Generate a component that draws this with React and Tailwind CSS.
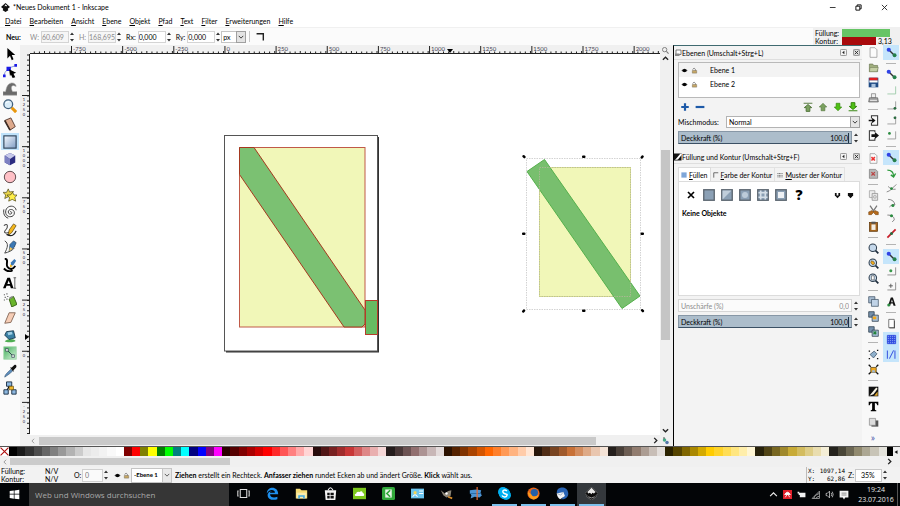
import React from "react";

const PALETTE = (
  "000000 1a1a1a 333333 4d4d4d 666666 808080 999999 b3b3b3 cccccc e6e6e6 ececec f2f2f2 f9f9f9 ffffff " +
  "800000 ff0000 808000 ffff00 008000 00ff00 008080 00ffff 000080 0000ff 800080 ff00ff " +
  "2b0000 550000 800000 aa0000 d40000 ff0000 ff2a2a ff5555 ff8080 ffaaaa ffd5d5 " +
  "280b0b 501616 782121 a02c2c c83737 d35f5f de8787 e9afaf f4d7d7 " +
  "241c1c 483737 6c5353 916f6f ac9393 c8b7b7 e3dbdb " +
  "2b1100 552200 803300 aa4400 d45500 ff6600 ff7f2a ff9955 ffb380 ffccaa ffe6d5 " +
  "28170b 502d16 784421 a05a2c c87137 d38d5f deaa87 e9c6af f4e3d7 " +
  "241f1c 483e37 6c5d53 917c6f ac9d93 c8beb7 e3dedb " +
  "2b2200 554400 806600 aa8800 d4aa00 ffcc00 ffd42a ffdd55 ffe680 ffeeaa fff6d5 " +
  "28220b 504416 786721 a0892c c8ab37 d3bc5f decd87 e9ddaf f4eed7 " +
  "24221c 484537 6c6753 918a6f aca793 c8c4b7 e3e2db"
).split(" ");

function Ic({ children, className = "size-[14px]" }) {
  return (
    <svg viewBox="0 0 16 16" className={className} fill="none" stroke="none" aria-hidden="true">
      {children}
    </svg>
  );
}

/* ---------- tool box ---------- */
const TOOLS = [
  ["Auswählen", <path d="M5 1v12l3-3 2 5 2-1-2-5h4z" fill="#000" />],
  ["Knoten", <><path d="M1 14Q2 5 14 2" stroke="#7c8cd0" /><path d="M0 12h3v3H0zM4 3h5v5H4zM13 0h3v3h-3z" fill="#1a1ae6" /><path d="M7 6l8 4-3 1 2 4-3 1-2-4-1 2z" fill="#000" /></>],
  ["Verbessern", <path d="M0 15v-4h3C4 6 5 2 10 1c3 0 5 2 5 4l-3-1c-3 0-3 4-1 7h5v4z" fill="#6a6a6a" stroke="#999" strokeWidth=".6" />],
  ["Zoom", <><circle cx="6" cy="6" r="5" fill="#d9ecf8" stroke="#3f5f7c" strokeWidth="1.5" /><path d="M10 10l5 5" stroke="#e8970c" strokeWidth="3.5" /><path d="M3 5q1-2 4-2" stroke="#fff" /></>],
  ["Messen", <><path d="M2 4l7-3 5 10-6 4z" fill="#dda98c" stroke="#50352b" /><path d="M2 4l6 11" stroke="#3c2a22" strokeWidth="1.8" /></>],
  ["Rechteck", <><defs><linearGradient id="rg" x1="0" y1="0" x2="1" y2="1"><stop stopColor="#f6faff" /><stop offset="1" stopColor="#7e9cc4" /></linearGradient></defs><rect x="1" y="1" width="14" height="14" fill="url(#rg)" stroke="#2f4258" strokeWidth="1.3" /></>],
  ["Quader", <><path d="M8 1l6 3v8l-6 3-6-3V4z" fill="#2c2c80" /><path d="M8 1l6 3-6 4-6-4z" fill="#c6c8ea" /><path d="M2 4l6 4v7l-6-3z" fill="#7d80c2" /></>],
  ["Ellipse", <circle cx="8" cy="8" r="6.5" fill="#ffc0c6" stroke="#4c3a3d" />],
  ["Stern", <><path d="M6 1l1.500 3.500L12 4 9 8l2 4-5-2-4 2 1-4-3-3 4 0z" fill="#e9d44a" stroke="#4d4718" strokeWidth=".8" /><path d="M11 5l1.500 3 3.500 0-2.500 3 1 4-4-2-4 2 1-4-3-3 4 0z" fill="#fff04a" stroke="#4d4718" strokeWidth=".8" /></>],
  ["Spirale", <path d="M8 8c1-1 2 0 2 1 0 2-4 2-4-1 0-4 7-4 7 1 0 6-10 6-10-1 0-8 11-9 12-2M1 5c-1 5 1 9 5 10" stroke="#3b3b3b" strokeWidth="1.1" />],
  ["Freihand", <><path d="M1 3c5-4 5 2 2 5s0 5 5 2" stroke="#444" strokeWidth="1.2" /><path d="M7 8l5-7 3 2-5 8-4 3z" fill="#f5b81e" stroke="#443308" strokeWidth=".7" /><path d="M4 13c6 3 9 1 11-4" stroke="#222" strokeWidth="1.5" /></>],
  ["Bezier", <><path d="M2 1c5 3 3 8 0 14 4-1 9-3 11-6" stroke="#444" strokeWidth="1.1" /><path d="M8 5l4-4 3 2-2 5-6 5z" fill="#3c78b4" stroke="#173452" strokeWidth=".7" /><path d="M8 8l3 2-4 3z" fill="#f5c65a" /></>],
  ["Kalligrafie", <><path d="M2 1c5 0 1 6 3 9s6 4 9-1M1 12c4 4 7 4 10 2" stroke="#000" strokeWidth="2.200" /><path d="M9 5l4-4 2 2-3 5-3 1z" fill="#3c78b4" /><path d="M8 7l3 2-3 2z" fill="#f5b81e" /></>],
  ["Text", <><path d="M0 14L5 2h3l4 12H9L8 11H4l-1 3zM5 9h3L6.500 5z" fill="#000" fillRule="evenodd" /><path d="M12 2h3M13.500 2v12M12 14h3" stroke="#555" /></>],
  ["Spray", <><path d="M7 7l5-3 4 9-6 3z" fill="#6ab52c" stroke="#355b15" /><path d="M7 5l4-2v2L8 7z" fill="#8a8a8a" /><path d="M1 2h1M4 1h1M2 5h1M5 4h1M4 7h1M1 8h1" stroke="#333" strokeWidth="1.400" /></>],
  ["Radierer", <path d="M7 2h7L9 13l-7 1z" fill="#f6cdb6" stroke="#7f6252" />],
  ["Füllen", <><path d="M2 14c2-3 10-3 12-1s-10 3-12 1z" fill="#4fae52" /><path d="M4 3l8-1 2 8-7 2-5-5z" fill="#3a7fa3" stroke="#16364a" /><path d="M5 4l5-1 1 3-5 1z" fill="#9fd0e6" /></>],
  ["Verlauf", <><defs><linearGradient id="gg" x1="0" y1="0" x2="1" y2="1"><stop stopColor="#3fae58" /><stop offset="1" stopColor="#d9f3dd" /></linearGradient></defs><rect x="1" y="1" width="14" height="14" fill="url(#gg)" stroke="#8fcf9b" /><path d="M5 5l6 6" stroke="#234" /><path d="M3 3h3v3H3zM10 10h3v3h-3z" fill="#eef8ef" stroke="#345" strokeWidth=".8" /></>],
  ["Pipette", <><path d="M2 15c0-3 4-6 7-9l2 2c-3 3-6 5-9 7z" fill="#5e8dbb" stroke="#284a6c" strokeWidth=".6" /><path d="M8 4l2 0 3-3c2-1 3 1 2 3l-3 3v2z" fill="#111" /></>],
  ["Verbinder", <><path d="M7 6L4 12M9 6l3 6" stroke="#000" strokeWidth="1.300" /><path d="M4 1h6v5H4zM1 10h5v5H1zM10 10h5v5h-5z" fill="#8db8e0" stroke="#16283c" /><path d="M7 6h5v4H7z" fill="#f1b92d" stroke="#5c4306" strokeWidth=".7" /></>],
];

/* ---------- command bar ---------- */
const page = <path d="M3 1h7l3 3v11H3z" fill="#fbfbfb" stroke="#8c8c8c" />;
const mag = <><path d="M10 10l5 5" stroke="#1f2d3d" strokeWidth="2.500" /><circle cx="7" cy="7" r="5.500" fill="#c4d7ea" stroke="#2d3d4d" strokeWidth="1.500" /></>;
const COMMANDS = [
  ["Neu", page],
  ["Öffnen", <><path d="M2 3h5l1 2h6v9H2z" fill="#9fae7d" stroke="#6c7753" /><path d="M3 8h12l-2 6H2z" fill="#c4cfa5" stroke="#6c7753" strokeWidth=".7" /></>],
  ["Speichern", <><rect x="1" y="1" width="14" height="14" fill="#1f4b85" /><rect x="2" y="1" width="12" height="4" fill="#e22020" /><path d="M2 5h12v3H2z" fill="#fff" /><path d="M5 10h6v5H5z" fill="#aac3de" /></>],
  ["Drucken", <><path d="M5 1h6v6H5z" fill="#eee" stroke="#777" /><path d="M2 7h12l1 6H1z" fill="#a9a9a9" stroke="#555" /><path d="M3 11h10" stroke="#fff" /></>],
  null,
  ["Importieren", <><path d="M5 5V1h9v14H5v-4" stroke="#333" strokeWidth="1.500" /><path d="M1 7h5V4l5 4-5 4V9H1z" fill="#111" /></>],
  ["Exportieren", <><path d="M10 3V1H2v14h8v-3" stroke="#333" strokeWidth="1.500" /><path d="M5 6h5V3l6 5-6 5v-3H5z" fill="#111" /></>],
  null,
  ["Rückgängig", <>{page}<path d="M5 6l5 5M10 6l-5 5" stroke="#e33" strokeWidth="2.200" /></>],
  ["Wiederholen", <><path d="M2 2h9l3 3v10H2z" fill="#b6b6b6" stroke="#777" /><path d="M5 6l5 5M10 6l-5 5" stroke="#b44" strokeWidth="1.800" /></>],
  null,
  ["Kopieren", <><path d="M2 1h8v10H2z" fill="#eee" stroke="#999" /><path d="M6 5h8v10H6z" fill="#e6e6e6" stroke="#888" /><circle cx="10" cy="10" r="2" stroke="#999" /></>],
  ["Ausschneiden", <><path d="M3 1l6 9M13 1L7 10" stroke="#777" strokeWidth="1.800" /><path d="M1 10l5-2 2 2 2-2 5 2v4h-4l-3-3-3 3H1z" fill="#b56a1b" stroke="#6b3a08" strokeWidth=".7" /></>],
  ["Einfügen", <><rect x="2" y="2" width="12" height="13" fill="#a5641c" stroke="#5c3508" /><path d="M5 5h6v8H5z" fill="#f3eee5" /><path d="M5 1h6v3H5z" fill="#555" /></>],
  null,
  ["Zoom Auswahl", mag],
  ["Zoom Zeichnung", <>{mag}<path d="M5 4l3 1 2 3-3 2-3-3z" fill="#f0a91e" stroke="#4b3a10" strokeWidth=".7" /></>],
  ["Zoom Seite", <>{mag}<path d="M5 4h4v6H5z" fill="#fff" stroke="#333" strokeWidth=".8" /></>],
  null,
  ["Duplizieren", <><path d="M1 1h9v9H1z" fill="#a8bdd2" stroke="#34485c" /><path d="M5 5h10v10H5z" fill="#bfd2e6" stroke="#34485c" /></>],
  ["Klonen", <><path d="M1 1h8v8H1z" fill="#7590ab" stroke="#1f3040" /><path d="M6 6h9v9H6z" fill="#a9c0d8" stroke="#1f3040" /><path d="M7 8h5v4H7z" fill="#f1a81e" /></>],
  ["Klon trennen", <><path d="M1 1h8v8H1z" fill="#7590ab" stroke="#1f3040" /><path d="M6 6h9v9H6z" fill="#a9c0d8" stroke="#1f3040" /><path d="M8 8l4 4M12 8l-4 4" stroke="#22823a" strokeWidth="2" /></>],
  null,
  ["Gruppieren", <><path d="M3 8l6-5 4 4-5 6z" fill="#8fb0cc" stroke="#34485c" /><path d="M1 2h2v2H1zM13 1h2v2h-2zM1 13h2v2H1zM13 13h2v2h-2z" fill="#111" /></>],
  ["Gruppierung aufheben", <><path d="M4 5h8v7H4z" fill="#f1a81e" stroke="#4b3a10" /><path d="M6 9h4v3H6z" fill="#9bb8d4" /><path d="M1 1l3 3M15 1l-3 3M1 15l3-3M15 15l-3-3" stroke="#111" strokeWidth="1.800" /></>],
  null,
  ["Füllung und Kontur", <><rect x="1" y="1" width="14" height="14" fill="#111" /><path d="M2 14L12 2l2 2L8 12z" fill="#f7f3e4" /><path d="M9 14l5-6v6z" fill="#e0a62c" /></>],
  ["Text und Schrift", <path d="M1 1h14v5h-1.500q-.5-3-3.500-3v9q0 1.500 2 1.500V15H4v-1.500q2 0 2-1.500V3Q3 3 2.500 6H1z" fill="#000" />],
  ["Ebenen", <><path d="M5 5h10v9H5z" fill="#555" /><path d="M2 2h9v10H2z" fill="#dcdcdc" stroke="#888" /></>],
];

/* ---------- snap bar ---------- */
const link = <><path d="M4 4l8 8" stroke="#333" strokeWidth="2" /><circle cx="4" cy="4" r="3" fill="#3043e6" /><circle cx="12.500" cy="12" r="2.800" fill="#25804a" /></>;
const corner = (c) => <path d="M14 2v11H2" stroke={c} strokeWidth="1.300" />;
const SNAPS = [
  ["Einrasten", link, true],
  null,
  ["Umrandung", link],
  ["Kanten", corner("#9ccaa8")],
  ["Ecken", <>{corner("#9a9a9a")}<circle cx="13" cy="12" r="2" fill="#2b6b40" /></>],
  ["Kantenmitten", <>{corner("#9a9a9a")}<circle cx="13" cy="4" r="2" fill="#2b6b40" /></>],
  ["Zentren", <>{corner("#9a9a9a")}<circle cx="5" cy="5" r="2" fill="#2b8b40" /></>],
  null,
  ["Knoten einrasten", link, true],
  ["Pfade", <path d="M2 3c6 0 9 3 9 9M7 10l4 3 3-5" stroke="#2d9a3c" strokeWidth="2" />],
  ["Pfadüberschneidungen", <><path d="M1 13C6 12 10 7 15 2M3 5c3 3 7 5 11 4" stroke="#777" strokeWidth="1.200" /><circle cx="8" cy="8" r="2" fill="#2b8b40" /></>],
  ["Spitze Knoten", <><path d="M3 2c6 0 9 3 10 8-3-1-5 0-8 3" stroke="#777" strokeWidth="1.300" /><circle cx="10" cy="11" r="2.200" fill="#2b8b40" /></>],
  ["Glatte Knoten", <><path d="M2 3c6 0 10 2 10 7l-3 3" stroke="#777" strokeWidth="1.300" /><circle cx="8" cy="4" r="2.200" fill="#2b8b40" /></>],
  ["Linienmitten", <><path d="M2 14L14 2" stroke="#c8202a" strokeWidth="2.500" /><circle cx="8" cy="8" r="2.200" fill="#2b6b40" /></>],
  null,
  ["Andere Punkte", link, true],
  ["Objektmitten", <>{corner("#888")}<circle cx="7" cy="7" r="2.200" fill="#3a9a4c" /></>],
  ["Rotationszentren", <>{corner("#888")}<path d="M7 4v6M4 7h6" stroke="#555" strokeWidth="1.300" /></>],
  ["Text-Grundlinien", <><path d="M3 14L7 2h3l4 12h-3l-1-3H7l-1 3zM7.500 9h2.500L8.500 5z" fill="#111" fillRule="evenodd" /><circle cx="4" cy="13" r="2.200" fill="#2b8b40" /></>],
  null,
  ["Seitenrand", <><path d="M5 4h8v11H5z" fill="#333" /><path d="M4 2h8v12H4z" fill="#fff" stroke="#444" /></>],
  ["Gitter", <><rect x="2" y="2" width="12" height="12" fill="#7d97f0" /><path d="M2 2h12v12H2zM5 2v12M8 2v12M11 2v12M2 5h12M2 8h12M2 11h12" stroke="#2d48e0" strokeWidth="1.300" /></>, true],
  ["Führungslinien", <path d="M2 2v12M5 14L11 2M13 2v12" stroke="#3a55e0" strokeWidth="1.500" />, true],
];

function IconColumn({ items, label, className }) {
  return (
    <nav aria-label={label} className={"flex w-[18px] shrink-0 flex-col items-center justify-between " + className}>
      {items.map((it, i) =>
        it ? (
          <button
            key={i}
            title={it[0]}
            className={"flex h-[15px] w-4 items-center justify-center " + (it[2] ? "bg-[#c5e5fb]" : "")}
          >
            <Ic className="size-[11px]">{it[1]}</Ic>
          </button>
        ) : (
          <span key={i} className="flex h-[7px] w-[10px] items-center">
            <span className="h-px w-full bg-[#b4b4b4]" />
          </span>
        )
      )}
    </nav>
  );
}

/* ---------- small controls ---------- */
function Spin() {
  return (
    <svg viewBox="0 0 6 12" className="h-[12px] w-[6px] shrink-0" aria-hidden="true">
      <path d="M1 4l2-2.500L5 4zM1 8l2 2.500L5 8z" fill="#333" />
    </svg>
  );
}

function NumField({ id, label, value, disabled }) {
  return (
    <div className="flex items-center">
      <label htmlFor={id} className={"mr-[2px] " + (disabled ? "text-[#8c8c8c]" : "text-black")}>{label}</label>
      <input
        id={id}
        defaultValue={value}
        disabled={disabled}
        className={"h-[12px] w-[28px] border border-[#d4d4d4] " + (disabled ? "bg-[#f6f6f6] text-[#8c8c8c]" : "bg-white text-black")}
      />
      <Spin />
    </div>
  );
}

function BarField({ id, label, value, filled }) {
  return (
    <div className="flex h-[13px] items-center">
      <div
        className={
          "flex h-full min-w-0 flex-1 items-center border px-[2px] " +
          (filled ? "border-[#8797a6] border-b-[#3b5064] bg-[#acbdcb] text-black" : "border-[#d6d6d6] bg-[#fbfbfb] text-[#8c8c8c]")
        }
      >
        <label htmlFor={id} className="flex-1">{label}</label>
        <input id={id} defaultValue={value} className={"w-[30px] bg-transparent text-right " + (filled ? "border-r border-[#1f3344]" : "")} />
      </div>
      <div className="flex w-[8px] justify-center"><Spin /></div>
    </div>
  );
}

function PanelHeader({ icon, title }) {
  return (
    <header className="flex h-[14px] items-center border-b border-[#dedede] pr-[2px]">
      <Ic className="size-[8px]">{icon}</Ic>
      <h2 className="flex-1 truncate">{title}</h2>
      <button title="Minimieren" className="mr-[6px]"><Ic className="size-[7px]"><rect x="1" y="1" width="14" height="14" rx="2" fill="#f4f4f4" stroke="#888" strokeWidth="2" /><path d="M10 4v8L5 8z" fill="#222" /></Ic></button>
      <button title="Schließen"><Ic className="size-[7px]"><rect x="1" y="1" width="14" height="14" rx="2" fill="#ddd" stroke="#888" strokeWidth="2" /><path d="M4 4l8 8M12 4l-8 8" stroke="#222" strokeWidth="2" /></Ic></button>
    </header>
  );
}

const eye = <><path d="M1 8q7-8 14 0q-7 8-14 0z" fill="#333" /><circle cx="8" cy="8" r="3.500" fill="#000" /></>;
const lock = <><path d="M4 6V5q3-5 6 0v4" stroke="#777" strokeWidth="1.800" /><path d="M3 8h10v6H3z" fill="#c6a765" stroke="#6b6252" /></>;

function LayersPanel() {
  return (
    <section className="flex flex-col">
      <PanelHeader icon={<><path d="M4 2h10v9H4z" fill="#fff" stroke="#555" strokeWidth="1.500" /><path d="M2 9h9v5H2z" fill="#888" /></>} title="Ebenen (Umschalt+Strg+L)" />
      <div className="flex flex-col gap-[3px] pl-[4px] pr-[2px] pt-[2px]">
        <ul className="h-[36px] border border-[#b9b9b9] bg-white">
          {["Ebene 1", "Ebene 2"].map((n, i) => (
            <li key={n} className={"flex h-[14px] items-center pl-[2px] " + (i === 0 ? "bg-[#f3f3f3]" : "")}>
              <button title="Sichtbarkeit"><Ic className="size-[7px]">{eye}</Ic></button>
              <button title="Sperren" className="ml-[3px]"><Ic className="size-[7px]">{lock}</Ic></button>
              <span className="ml-[12px]">{n}</span>
            </li>
          ))}
        </ul>
        <div className="flex h-[12px] items-center justify-between px-[2px]">
          <div className="flex gap-[5px]">
            <button title="Hinzufügen"><Ic className="size-[10px]"><path d="M8 2v12M2 8h12" stroke="#1d5aa8" strokeWidth="3.500" /></Ic></button>
            <button title="Entfernen"><Ic className="size-[10px]"><path d="M1 8h14" stroke="#1d5aa8" strokeWidth="3.500" /></Ic></button>
          </div>
          <div className="flex gap-[5px]">
            <button title="Ganz nach oben"><Ic className="size-[10px]"><path d="M1 2h14M8 4l6 5h-3v6H5V9H2z" fill="#7aa05f" stroke="#53763c" strokeWidth="1.500" /></Ic></button>
            <button title="Nach oben"><Ic className="size-[10px]"><path d="M8 2l6 6h-3v6H5V8H2z" fill="#7aa05f" stroke="#53763c" /></Ic></button>
            <button title="Nach unten"><Ic className="size-[10px]"><path d="M8 14l6-6h-3V2H5v6H2z" fill="#4fc014" stroke="#2f8208" /></Ic></button>
            <button title="Ganz nach unten"><Ic className="size-[10px]"><path d="M1 14h14M8 12l6-5h-3V1H5v6H2z" fill="#4fc014" stroke="#2f8208" strokeWidth="1.500" /></Ic></button>
          </div>
        </div>
        <div className="flex items-center">
          <label htmlFor="blend" className="w-[48px]">Mischmodus:</label>
          <div className="relative flex-1">
            <select id="blend" className="block h-[12px] w-full appearance-none border border-[#b3b3b3] bg-white px-[2px]">
              <option>Normal</option>
            </select>
            <span className="pointer-events-none absolute inset-y-0 right-0 flex w-[10px] items-center justify-center border border-[#a0a0a0] bg-[#e6e6e6]">
              <Ic className="size-[6px]"><path d="M2 5l6 6 6-6" stroke="#333" strokeWidth="2.500" /></Ic>
            </span>
          </div>
        </div>
        <BarField id="layer-opacity" label="Deckkraft (%)" value="100,0" filled />
      </div>
    </section>
  );
}

function PaintButton({ title, children }) {
  return (
    <button title={title}>
      <Ic className="size-[12px]">
        <rect x="1" y="1" width="14" height="14" fill="#8ba0b5" stroke="#5c6670" strokeWidth="1.800" />
        {children}
      </Ic>
    </button>
  );
}

function FillStrokePanel() {
  return (
    <section className="flex flex-col">
      <PanelHeader icon={<><rect x="0" y="1" width="15" height="14" fill="#111" /><path d="M2 14L13 1l3 2-8 10z" fill="#fff" /></>} title="Füllung und Kontur (Umschalt+Strg+F)" />
      <div className="flex flex-col pl-[4px] pr-[2px] pt-[3px]">
        <div role="tablist" className="flex h-[14px] items-stretch">
          <button role="tab" className="flex items-center gap-[2px] border border-b-0 border-[#dcdcdc] bg-white px-[2px]">
            <Ic className="size-[6px]"><path d="M1 1h14v14H1z" fill="#7fa6d8" /></Ic><span><u>F</u>üllen</span>
          </button>
          <button role="tab" className="flex items-center gap-[2px] border border-b-0 border-l-0 border-[#e2e2e2] px-[2px]">
            <Ic className="size-[6px]"><path d="M2 15V2h12" stroke="#444" strokeWidth="2" /></Ic><span><u>F</u>arbe der Kontur</span>
          </button>
          <button role="tab" className="flex items-center gap-[2px] border border-b-0 border-l-0 border-[#e2e2e2] px-[2px]">
            <Ic className="size-[6px]"><path d="M1 4h14M1 9h14M1 13h14" stroke="#555" strokeWidth="2" strokeDasharray="3 1" /></Ic><span><u>M</u>uster der Kontur</span>
          </button>
        </div>
        <div className="h-[115px] border border-[#dcdcdc] bg-white px-[3px]">
          <div className="flex h-[26px] items-center gap-[6px] pl-[3px]">
            <button title="Keine"><Ic className="size-[12px]"><path d="M4 4l8 8M12 4l-8 8" stroke="#000" strokeWidth="2.200" /></Ic></button>
            <PaintButton title="Einfache Farbe" />
            <PaintButton title="Linearer Verlauf"><path d="M2 2h12L2 14z" fill="#c0cedb" /></PaintButton>
            <PaintButton title="Radialer Verlauf"><circle cx="8" cy="8" r="4" fill="#bccbd9" /></PaintButton>
            <PaintButton title="Muster"><path d="M5 2v12M11 2v12M2 5h12M2 11h12" stroke="#d5dfe8" strokeWidth="2" /></PaintButton>
            <PaintButton title="Farbfeld"><path d="M4 4h8v8H4z" fill="#eef1f4" /></PaintButton>
            <button title="Unbekannt" className="w-[12px] font-['Open_Sans',sans-serif] text-[14px] font-extrabold leading-[14px]">?</button>
            <span className="flex-1" />
            <button title="Gerade-ungerade"><Ic className="size-[7px]"><path d="M2 2h12v6l-6 6-6-6z" fill="#111" /><path d="M6 1h4v7H6z" fill="#fff" /></Ic></button>
            <button title="Ungleich null" className="mr-[2px]"><Ic className="size-[7px]"><path d="M2 2h12v6l-6 6-6-6z" fill="#111" /></Ic></button>
          </div>
          <p className="font-bold leading-[10px]">Keine Objekte</p>
        </div>
        <div className="flex flex-col gap-[3px] pt-[3px]">
          <BarField id="blur" label="Unschärfe (%)" value="0,0" />
          <BarField id="opacity" label="Deckkraft (%)" value="100,0" filled />
        </div>
      </div>
    </section>
  );
}

/* ---------- rulers and canvas ---------- */
function HRuler() {
  const minors = Array.from({ length: 124 }, (_, i) => i);
  const labels = ["-750", "-500", "-250", "0", "250", "500", "750", "1000", "1250", "1500", "1750", "2000"];
  return (
    <svg className="h-[9px] w-full min-w-0 flex-1" aria-hidden="true">
      {minors.map((i) => (
        <path key={i} d={`M${4.3 + i * 5.115} ${i % 5 === 2 ? 6 : 6.500}V9`} stroke="#222" />
      ))}
      <path d="M0 8.500H633" stroke="#222" />
      {labels.map((t, i) => (
        <g key={t}>
          <path d={`M${41.500 + i * 51.150} 1V9`} stroke="#222" />
          <text x={43 + i * 51.150} y="6" fontSize="6" fill="#445">{t}</text>
        </g>
      ))}
      <path d="M417 4h6l-3 4z" fill="#000" />
    </svg>
  );
}

function VRuler() {
  const labels = ["1250", "1000", "750", "500", "250", "0", "-250"];
  return (
    <svg className="w-[9px] shrink-0 self-stretch" aria-hidden="true">
      {Array.from({ length: 75 }, (_, i) => (
        <path key={i} d={`M6 ${1 + i * 5.115}H9`} stroke="#222" />
      ))}
      <path d="M8.500 0V380" stroke="#222" />
      {labels.map((t, i) => (
        <g key={t}>
          <path d={`M1 ${41.500 + i * 51.150}H9`} stroke="#222" />
          <text x="3" y={43 + i * 51.150} fontSize="4" fill="#113" className="[text-orientation:upright] [writing-mode:vertical-rl]">{t}</text>
        </g>
      ))}
      <path d="M4 280v6l4-3z" fill="#000" />
    </svg>
  );
}

function Drawing() {
  return (
    <svg width="630" height="381" viewBox="30 54 630 381" className="absolute left-0 top-0" aria-label="Zeichnung">
      <path d="M226 351.500H378V137" stroke="#333" strokeWidth="2" fill="none" />
      <rect x="224.500" y="135.500" width="153" height="215.500" fill="#fff" stroke="#555" />
      <rect x="239.500" y="147.500" width="125.500" height="179.500" fill="#f1f7b8" stroke="#c05a48" />
      <path d="M239.500 147.500H254L365 310v14l-3 3H344L239.500 174.500z" fill="#7bc172" stroke="#a5381f" />
      <rect x="365.500" y="300.500" width="12" height="34" fill="#67bb62" stroke="#b53c2a" />
      <rect x="539.500" y="167.500" width="91" height="129" fill="#f1f7b8" stroke="#dfe58c" />
      <path d="M527 171.500L544.500 159.500 640 296 622 308.500z" fill="#78bf6e" stroke="#55b04c" />
      <g fill="none" stroke="#c8c8c8" strokeWidth=".8" strokeDasharray="1.500 1">
        <rect x="526.500" y="158.500" width="114" height="151" />
        <rect x="539.500" y="167.500" width="91" height="129" stroke="#b4b89a" />
      </g>
      <g fill="#000">
        {[[524, 157, 45], [584, 157, 0], [642.500, 157, -45], [524, 234, 0], [642.500, 234, 0], [524, 311, -45], [584, 311, 0], [642.500, 311, 45]].map(([x, y, r], i) => (
          <rect key={i} x={x - 2} y={y - 1.500} width="3.500" height="2.500" rx="1" transform={`rotate(${r} ${x} ${y})`} />
        ))}
      </g>
    </svg>
  );
}

function Arrow({ d }) {
  return <Ic className="size-[7px]"><path d={d} stroke="#222" strokeWidth="3" /></Ic>;
}

function CanvasArea() {
  return (
    <div className="flex min-w-0 flex-1 flex-col bg-[#f0f0f0] pl-[1px]">
      <div className="flex h-[9px] items-end bg-[#f0f0f0] pl-[9px]">
        <HRuler />
        <button title="Zoom" className="flex w-[10px] shrink-0 justify-center"><Ic className="size-[7px]"><circle cx="6" cy="6" r="5" stroke="#777" strokeWidth="2" /><path d="M10 10l5 5" stroke="#777" strokeWidth="2.500" /></Ic></button>
      </div>
      <div className="flex min-h-0 flex-1">
        <VRuler />
        <main className="relative min-w-0 flex-1 overflow-hidden bg-white"><Drawing /></main>
        <div className="flex w-[10px] shrink-0 flex-col items-center py-px">
          <Arrow d="M2 11l6-6 6 6" />
          <div className="mt-[88px] h-[190px] w-[9px] bg-[#c5c5c5]" />
          <span className="flex-1" />
          <Arrow d="M2 5l6 6 6-6" />
        </div>
      </div>
      <div className="flex h-[11px] items-center pl-[9px]">
        <Ic className="size-[6px]"><path d="M11 2L5 8l6 6" stroke="#999" strokeWidth="2.500" /></Ic>
        <div className="ml-[3px] h-[8px] w-[87%] bg-[#c9c9c9]" />
        <span className="flex-1" />
        <Arrow d="M5 2l6 6-6 6" />
        <Ic className="ml-[3px] size-[8px]"><circle cx="5" cy="6" r="3.500" fill="#4a8" /><circle cx="10" cy="11" r="3.500" fill="#57a" /><path d="M2 2h4" stroke="#555" strokeWidth="2" /></Ic>
      </div>
    </div>
  );
}

/* ---------- top ---------- */
const MENU = [["D", "atei"], ["B", "earbeiten"], ["A", "nsicht"], ["E", "bene"], ["O", "bjekt"], ["P", "fad"], ["T", "ext"], ["F", "ilter"], ["E", "rweiterungen"], ["H", "ilfe"]];

function Top() {
  return (
    <>
      <header className="flex h-[14px] items-center bg-white pl-[1px] pr-[12px]">
        <Ic className="size-[9px]"><path d="M8 0l8 7-4 3 1 3-5 3-5-3 1-3-4-3z" fill="#111" /><path d="M8 2l3 3-2 1-1-1-2 1z" fill="#fff" /></Ic>
        <h1 className="ml-[3px] flex-1">*Neues Dokument 1 - Inkscape</h1>
        <div className="flex gap-[19px]">
          <button title="Minimieren"><Ic className="size-[7px]"><path d="M2 8h13" stroke="#222" strokeWidth="2" /></Ic></button>
          <button title="Wiederherstellen"><Ic className="size-[7px]"><path d="M2 5h9v9H2zM5 5V2h9v9h-3" stroke="#111" strokeWidth="2.200" /></Ic></button>
          <button title="Schließen"><Ic className="size-[7px]"><path d="M2 2l12 12M14 2L2 14" stroke="#222" strokeWidth="2" /></Ic></button>
        </div>
      </header>
      <nav className="flex h-[13px] items-center gap-[8px] bg-white pl-[5px]">
        {MENU.map(([u, r]) => (
          <button key={u + r}><u>{u}</u>{r}</button>
        ))}
      </nav>
      <div className="flex h-[18px] items-center border-t border-[#f0f0f0] bg-[#fbfbfb] pl-[6px]">
        <span className="w-[24px] font-bold">Neu:</span>
        <div className="flex items-center gap-[4px]">
          <NumField id="w" label="W:" value="60,609" disabled />
          <NumField id="h" label="H:" value="168,695" disabled />
          <NumField id="rx" label="Rx:" value="0,000" />
          <NumField id="ry" label="Ry:" value="0,000" />
        </div>
        <div className="relative">
          <select aria-label="Einheit" className="block h-[12px] w-[25px] appearance-none border border-[#c4c4c4] bg-white px-px"><option>px</option></select>
          <span className="pointer-events-none absolute inset-y-0 right-0 flex w-[10px] items-center justify-center border border-[#a0a0a0] bg-[#e3e3e3]">
            <Ic className="size-[6px]"><path d="M2 5l6 6 6-6" stroke="#333" strokeWidth="2.500" /></Ic>
          </span>
        </div>
        <span className="ml-[3px] h-[11px] w-px bg-[#c8c8c8]" />
        <button title="Ecken nicht abrunden" className="ml-[6px]"><Ic className="size-[9px]"><path d="M1 3h12v12" stroke="#222" strokeWidth="2.500" /></Ic></button>
        <span className="flex-1" />
        <div className="flex h-full w-[87px] flex-col justify-center bg-[#f0f0f0] pl-[2px] pr-[1px] leading-[8px]">
          <div className="flex items-center"><span className="w-[27px]">Füllung:</span><span className="h-[8px] w-[48px] bg-[#66c565]" /></div>
          <div className="flex items-center"><span className="w-[27px]">Kontur:</span><span className="h-[8px] w-[34px] bg-[#a80a0c]" /><span className="ml-[2px]">3,13</span></div>
        </div>
      </div>
    </>
  );
}

/* ---------- bottom ---------- */
function StatusBar() {
  return (
    <footer className="flex h-[16px] items-center bg-[#f2f2f2]">
      <dl className="grid w-[74px] grid-cols-[44px_auto] pl-[1px] leading-[8px]">
        <dt>Füllung:</dt><dd>N/V</dd>
        <dt>Kontur:</dt><dd>N/V</dd>
      </dl>
      <label htmlFor="o" className="w-[8px]">O:</label>
      <input id="o" defaultValue="0" className="h-[13px] w-[21px] border border-[#d0d0d0] bg-[#fafafa] px-[2px] text-[#777]" />
      <Spin />
      <button title="Sichtbar" className="ml-[5px]"><Ic className="size-[7px]">{eye}</Ic></button>
      <button title="Sperren" className="ml-[2px]"><Ic className="size-[7px]">{lock}</Ic></button>
      <div className="relative ml-[1px]">
        <select aria-label="Ebene" className="block h-[15px] w-[41px] appearance-none border border-[#c4c4c4] bg-white px-[2px] text-[6px] font-bold"><option>-Ebene 1</option></select>
        <span className="pointer-events-none absolute inset-y-0 right-0 flex w-[10px] items-center justify-center border border-[#c4c4c4] bg-[#e8e8e8]">
          <Ic className="size-[6px]"><path d="M2 5l6 6 6-6" stroke="#555" strokeWidth="2.500" /></Ic>
        </span>
      </div>
      <p className="ml-[3px] min-w-0 flex-1 truncate"><b>Ziehen</b> erstellt ein Rechteck. <b>Anfasser ziehen</b> rundet Ecken ab und ändert Größe. <b>Klick</b> wählt aus.</p>
      <dl className="grid w-[39px] grid-cols-[7px_1fr] border-l border-[#bbb] pl-px font-['DejaVu_Sans_Mono',monospace] text-[6px] leading-[8px]">
        <dt>X:</dt><dd className="text-right">1097,14</dd>
        <dt>Y:</dt><dd className="text-right">62,86</dd>
      </dl>
      <label htmlFor="z" className="ml-[3px] w-[7px]">Z:</label>
      <input id="z" defaultValue="35%" className="h-[13px] w-[27px] border border-[#c8c8c8] bg-white px-[5px]" />
      <Spin />
      <span className="w-[12px]" />
    </footer>
  );
}

const APPS = [
  ["Aufgabenansicht", <path d="M4 3h8v10H4zM2 5H1v6h1M14 5h1v6h-1" stroke="#ddd" strokeWidth="1.300" />],
  ["Edge", <path d="M1 8c0-9 14-10 14 1H5c0 4 5 5 9 3v3C8 17 2 15 2 10c0-3 3-5 6-5-2 0-3 1-3 2h6c0-4-7-5-10 1z" fill="#1e90ee" />],
  ["Explorer", <><path d="M1 2h5l2 2h7v10H1z" fill="#f6dc74" /><path d="M2 7h12v7H2z" fill="#f9ecac" /><path d="M4 10h8v4h-2v-2H6v2H4z" fill="#42a8e0" /></>],
  ["Store", <><path d="M1 4h14l-1 12H2z" fill="#f4f4f4" /><path d="M5 4q3-6 6 0" stroke="#f4f4f4" strokeWidth="1.300" /><path d="M4 7h3v3H4zM8 7h4v3H8zM4 11h3v3H4zM8 11h4v3H8z" fill="#111" /></>],
  ["Wolke", <><rect x="0" y="1" width="16" height="14" fill="#7dc81c" /><path d="M3 11h10q2-2-1-4-1-3-4-1-4-1-4 2-3 1-1 3z" fill="#fff" /></>],
  ["Notizen", <><rect x="0" y="0" width="16" height="16" rx="2" fill="#31a83a" /><path d="M4 3h8v10H4z" fill="#eaf7ea" /><path d="M10 4L6 8l4 4" stroke="#31a83a" strokeWidth="2" /></>],
  ["Karte", <><rect x="0" y="2" width="16" height="12" fill="#6cc5ee" /><circle cx="5" cy="7" r="2" fill="#f3d45a" /><path d="M2 12q3-5 6 0M10 5h5M10 8h5" stroke="#fff" strokeWidth="1.300" /></>],
  ["GIMP", <><path d="M1 4l5 4 4-3 4-1-1 7-5 2-4-3z" fill="#8b8577" /><circle cx="8" cy="8" r="1.500" fill="#fff" /><path d="M10 12l5 2" stroke="#d98e2b" strokeWidth="2" /></>],
  ["Schnitt", <><path d="M1 4l8-1 6 1-1 4 2 2-3 3-6-1-5 2 1-4-2-3z" fill="#4d95d4" /><path d="M1 8h14" stroke="#2a6ca8" strokeWidth="1.200" /><path d="M10 0v16" stroke="#e86a30" strokeWidth="1.500" /></>],
  ["Skype", <><circle cx="6" cy="6" r="6" fill="#00aff0" /><circle cx="10" cy="10" r="6" fill="#00aff0" /><circle cx="8" cy="8" r="7" fill="#00aff0" /><path d="M11 5C8 2 4 5 7 7.500s5 0 4 3-5 2-6 0" stroke="#fff" strokeWidth="1.800" /></>, "run"],
  ["Firefox", <><circle cx="8" cy="8" r="7.500" fill="#e8641b" /><circle cx="9" cy="7" r="4.500" fill="#2460a8" /><path d="M1 5c1 3 4 3 5 5s5 3 8-1c0 5-4 7-7 6S1 11 1 5z" fill="#fb9d1c" /></>, "run"],
  ["Thunderbird", <><path d="M2 3c4-4 12-3 13 4 1 6-5 9-9 8 4-2 3-4 1-5L1 8c0-2 0-3 1-5z" fill="#2a64b4" /><path d="M1 8l8-2 2 5-6 4c-2-1-4-4-4-7z" fill="#f3f5f8" /><path d="M1 8l5 2 3-4" stroke="#9ab" /></>, "run"],
  ["Inkscape", <><path d="M8 0l8 8-3 3 1 1-6 4-6-4 1-1-3-3z" fill="#0c0c0c" stroke="#999" strokeWidth=".6" /><path d="M8 1l5 5-2 2-2-1-1 2-2-2-2 1-1-2z" fill="#e8e8e8" /><path d="M4 12q4 3 8 0" stroke="#999" strokeWidth="1.200" /></>, "active"],
];

function Taskbar() {
  return (
    <footer className="flex h-[23px] items-stretch bg-[#030507] font-['Open_Sans',sans-serif] text-[#e6e6e6]">
      <button title="Start" className="flex w-[29px] items-center justify-center"><Ic className="size-[11px]"><path d="M1 3l6-1v5H1zM8 2l7-1v6H8zM1 8h6v6l-6-1zM8 8h7v7l-7-1z" fill="#fff" /></Ic></button>
      <input aria-label="Suche" placeholder="Web und Windows durchsuchen" className="w-[200px] bg-[#363636] px-[6px] text-[8px] placeholder:text-[#a8a8a8]" />
      {APPS.map(([n, g, s]) => (
        <button
          key={n}
          title={n}
          className={"flex w-[29px] flex-col items-center px-[2px] " + (s === "active" ? "bg-[#34383c]" : "")}
        >
          <span className="flex flex-1 items-center"><Ic className="size-[13px]">{g}</Ic></span>
          <span className={"h-[2px] w-full " + (s ? "bg-[#7cc0ec]" : "")} />
        </button>
      ))}
      <span className="flex-1" />
      <div className="flex items-center gap-[5px]">
        <Ic className="size-[9px]"><path d="M2 11l6-6 6 6" stroke="#eee" strokeWidth="2" /></Ic>
        <Ic className="size-[9px]"><rect width="16" height="16" fill="#e0202a" /><path d="M3 8q5-8 10 0zM8 7l-4 6M9 8l3 5" fill="#fff" stroke="#fff" strokeWidth="1.500" /></Ic>
        <Ic className="size-[9px]"><path d="M3 5h12v8H5V9H3zM1 3h3v3H1z" fill="#f2f2f2" /></Ic>
        <Ic className="size-[9px]"><path d="M2 15L15 2v13zM5 15q0-6 10-9M9 15q0-3 6-4" stroke="#aaa" strokeWidth="1.500" /></Ic>
        <Ic className="size-[9px]"><path d="M2 6h2l4-4v12l-4-4H2zM11 5q2 3 0 6M13 3q3 5 0 10" stroke="#ddd" strokeWidth="1.300" /></Ic>
        <Ic className="size-[10px]"><path d="M1 1h14v11h-5l-2 3-2-3H1z" fill="#f4f4f4" /><path d="M4 5h8M4 8h8" stroke="#555" /></Ic>
      </div>
      <time className="ml-[9px] flex w-[36px] flex-col justify-center text-center leading-[10px]"><span>19:24</span><span>23.07.2016</span></time>
      <span className="ml-[3px] w-[3px] border-l border-[#555]" />
    </footer>
  );
}

export default function App() {
  return (
    <div className="flex min-h-screen flex-col overflow-hidden bg-[#f0f0f0] font-[Lato,sans-serif] text-[7px] leading-[10px] text-black">
      <Top />
      <div className="flex flex-1">
        <nav aria-label="Werkzeuge" className="flex w-[20px] shrink-0 flex-col bg-[#fafafa]">
          <div className="flex h-[352px] flex-col items-center justify-between">
            {TOOLS.map(([n, g]) => (
              <button key={n} title={n} className={"flex h-[17px] w-[18px] items-center justify-center " + (n === "Rechteck" ? "bg-[#bfe2fa]" : "")}>
                <Ic className="size-[14px]">{g}</Ic>
              </button>
            ))}
          </div>
        </nav>
        <CanvasArea />
        <aside className="ml-[3px] flex w-[189px] shrink-0 flex-col gap-[6px] border-l border-t border-l-black border-t-[#3f6a70] bg-[#f3f3f3]">
          <LayersPanel />
          <FillStrokePanel />
        </aside>
        <div className="flex shrink-0 bg-[#f8f8f8] pl-[2px]">
          <div className="flex flex-col items-center">
            <IconColumn items={COMMANDS} label="Befehle" className="h-[385px]" />
            <button title="Mehr" className="mt-[2px] text-[10px] text-[#4455aa]">»</button>
          </div>
          <IconColumn items={SNAPS} label="Einrasten" className="h-[317px]" />
        </div>
      </div>
      <div className="flex h-[10px] items-stretch border-t border-[#555] bg-[#f0f0f0] pr-[2px]">
        <button title="Keine" className="w-[9px] bg-white"><Ic className="size-[9px]"><path d="M1 1l14 14M15 1L1 15" stroke="#b01010" strokeWidth="2" /></Ic></button>
        {PALETTE.map((c, i) => (
          <span key={i} className="flex-1" style={{ backgroundColor: "#" + c }} />
        ))}
        <span className="w-[6px] bg-black" />
        <button title="Palette" className="w-[6px]"><Ic className="size-[6px]"><path d="M12 3v10L4 8z" fill="#111" /></Ic></button>
      </div>
      <div className="flex h-[11px] items-center pl-[2px] pr-[7px]">
        <Ic className="size-[6px]"><path d="M11 2L5 8l6 6" stroke="#999" strokeWidth="2.500" /></Ic>
        <div className="ml-[2px] h-[7px] w-[220px] bg-[#cbcbcb]" />
        <span className="flex-1" />
        <Arrow d="M5 2l6 6-6 6" />
      </div>
      <StatusBar />
      <Taskbar />
    </div>
  );
}
